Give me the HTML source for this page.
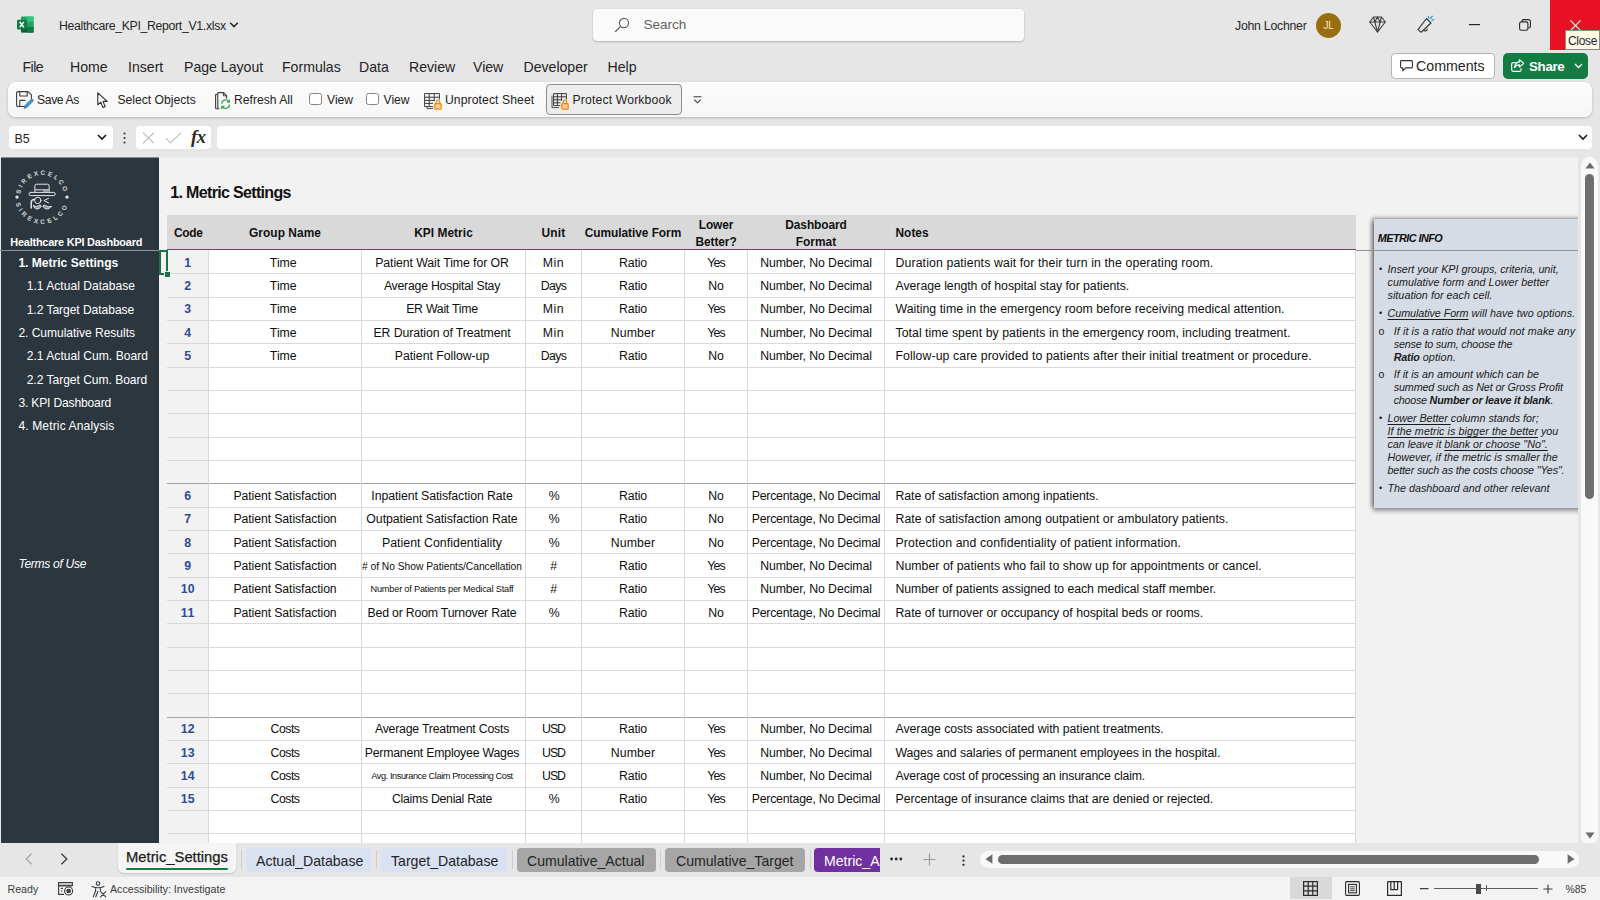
<!DOCTYPE html>
<html lang="en"><head><meta charset="utf-8"><title>Healthcare_KPI_Report_V1.xlsx - Excel</title>
<style>
*{box-sizing:border-box;margin:0;padding:0}
html,body{width:1600px;height:900px;overflow:hidden}
body{position:relative;background:#e6e6e6;font-family:"Liberation Sans",sans-serif;color:#242424;font-size:12.5px}
.abs,#titlebar *,#menubar *,#ribbon *,#fbar *,#tabs *,#status *{position:absolute;white-space:nowrap}
svg{position:absolute;overflow:visible}
/* ---- title bar ---- */
#titlebar{position:absolute;left:0;top:0;width:1600px;height:50px}
.fname{left:59px;top:18px;font-size:12.3px;letter-spacing:-.33px;color:#262626;line-height:16px}
#search{left:593px;top:9px;width:431px;height:32px;background:#fafafa;border-radius:4px;box-shadow:0 1px 2px rgba(0,0,0,.22),0 0 1px rgba(0,0,0,.12)}
#search .t{left:50.5px;top:6.5px;font-size:13.5px;color:#616161;line-height:18px}
.user{left:1235px;top:18px;font-size:12.3px;letter-spacing:-.25px;line-height:16px;color:#262626}
.avatar{left:1316px;top:12.5px;width:25px;height:25px;border-radius:50%;background:#9a6d0e}
.avatar span{left:0;width:25px;text-align:center;top:6px;font-size:10px;line-height:13px;color:#f6e7c4;letter-spacing:-.3px}
#closebtn{left:1550px;top:0;width:50px;height:50px;background:#e81123}
#tip{left:1565px;top:30px;width:34.5px;height:20px;background:#fdfde6;border:1px solid #8a8a8a}
#tip span{left:2px;top:2px;font-size:12px;letter-spacing:-.3px;line-height:16px;color:#1b1b3a}
/* ---- menu ---- */
#menubar{position:absolute;left:0;top:50px;width:1600px;height:32px}
#menubar .m{top:7.6px;font-size:14.1px;line-height:18px;color:#242424}
#cmt{left:1391px;top:3px;width:104px;height:25.5px;background:#fff;border:1px solid #b5b5b5;border-radius:4px}
#cmt span{left:24px;top:4px;font-size:14.2px;line-height:17px;color:#242424}
#share{left:1503px;top:3px;width:85px;height:25.5px;background:#127c42;border-radius:5px}
#share span{left:26px;top:4.5px;font-size:13.3px;line-height:17px;color:#fff;font-weight:bold;letter-spacing:-.3px}
/* ---- ribbon ---- */
#ribbon{position:absolute;left:8px;top:82px;width:1584px;height:35px;background:linear-gradient(#fbfbfb,#f7f7f7);border-radius:8px;box-shadow:0 1px 3px rgba(0,0,0,.22)}
#ribbon .r{top:11px;font-size:12.15px;line-height:15px;color:#242424}
#ribbon .cb{top:10.7px;width:12.8px;height:12.8px;border:1px solid #858585;border-radius:2.5px;background:#fff}
#pw{left:538px;top:2px;width:136px;height:30.5px;border:1px solid #8c8c8c;border-radius:4px;background:#ededed}
/* ---- formula bar ---- */
#fbar{position:absolute;left:0;top:117px;width:1600px;height:40px}
#nbox{left:9px;top:9px;width:104px;height:23px;background:#fff;border-radius:4px}
#nbox span{left:5.5px;top:4.5px;font-size:12.4px;line-height:16px;color:#242424}
#fxbox{left:136px;top:9px;width:75px;height:23px;background:#fff;border-radius:4px}
#finput{left:217px;top:9px;width:1374.5px;height:23px;background:#fff;border-radius:4px}
/* ---- sidebar ---- */
#side{position:absolute;left:1px;top:157.5px;width:157.5px;height:685.5px;background:#2c363f;color:#fff}
#side .s{position:absolute;white-space:nowrap;font-size:12.05px;line-height:15px;color:#fff}
#side .b{font-weight:bold}
#side .line{position:absolute;left:-1px;top:92.5px;width:159.5px;height:1px;background:#8f9396}
/* ---- sheet ---- */
#sheet{position:absolute;left:158.5px;top:157.5px;width:1419px;height:685.5px;background:#f2f2f2;overflow:hidden}
#sheet>*{position:absolute}
#sheet{--ox:-158.5px;--oy:-157.5px}
#sheet>*{margin-left:-158.5px;margin-top:-157.5px}
.ttl{left:170.3px;top:183px;font-size:16px;line-height:19px;font-weight:bold;color:#111;white-space:nowrap}
.thead{background:#d9d9d9;border-bottom:2px solid #76456e}
.th{top:215px;height:34px;display:flex;align-items:center;justify-content:center;text-align:center;font-weight:bold;font-size:11.9px;line-height:16.5px;color:#111;white-space:nowrap;padding-top:3px}
.th.l{justify-content:flex-start;text-align:left}
.tbody{background:#fff}
.codebg{background:#f2f2f2}
.hl{height:1px;background:#d9d9d9}
.hl.dark{background:#a3a3a3}
.vl{width:1px;background:#d9d9d9}
.td{height:23.3px;line-height:23.3px;text-align:center;font-size:12.3px;color:#0f0f0f;white-space:nowrap;overflow:hidden;padding-top:1px}
.td.l{text-align:left}
.td.code{font-weight:bold;color:#2f4b98}
/* ---- bottom ---- */
#tabs{position:absolute;left:0;top:843px;width:1600px;height:33px;background:#e6e6e6}
#tabs .tab{top:4.5px;height:24.5px;border-radius:4px;font-size:14.1px;line-height:18px}
#tabs .tab span{top:4px;left:10px}
#tabs .sep{top:7px;width:1px;height:19px;background:#cfcfcf}
#status{position:absolute;left:0;top:877px;width:1600px;height:23px;background:#f3f3f3}
#status .st{top:6px;font-size:10.65px;line-height:13px;color:#3b3b3b}
/* ---- info panel ---- */
#panel{left:1374px;top:218.5px;width:215px;height:289px;background:#d6dce5;box-shadow:-2px -1px 4px rgba(0,0,0,.4),-1px 3px 5px rgba(0,0,0,.36);font-style:italic;color:#1a1a1a;z-index:4}
#panel>*{position:absolute;white-space:nowrap}
#panel .ph{left:3.8px;top:12.5px;font-weight:bold;font-size:10.8px;line-height:14px;color:#111}
#panel .pl{left:13.5px;font-size:10.75px;line-height:13px}
#panel .pl.sub{left:19.7px}
#panel .bu{position:absolute;left:-8.5px;top:0;font-style:normal;font-size:9px}
#panel .bu.o{left:-15.3px;font-size:10.5px;top:0}
#panel u{text-decoration-thickness:1px;text-underline-offset:1.5px}
#vscroll{position:absolute;left:1581px;top:157px;width:17px;height:688px;background:#f9f9f9;border-radius:8.5px}
#vscroll *{position:absolute}
#vscroll .thumb{left:4px;top:17px;width:9px;height:325px;border-radius:4.5px;background:#6e6e6e}
#atab{left:117.5px;top:0;width:118.5px;height:29.5px;background:#f5f5f5;border-radius:0 0 6px 6px;box-shadow:0 1px 2px rgba(0,0,0,.15)}
#atab span{left:8.5px;top:4.5px;font-size:14.8px;line-height:18px;color:#1a1a1a;-webkit-text-stroke:.25px #1a1a1a}
#atab i{left:8.5px;top:25px;width:102px;height:2px;background:#127c42;border-radius:1px}
#hscroll{left:980px;top:8px;width:599px;height:16.5px;background:#f9f9f9;border-radius:8.25px}
#hscroll .thumb{left:17.5px;top:4px;width:541px;height:9px;border-radius:4.5px;background:#6e6e6e}

</style></head>
<body>
<div id="titlebar">
  <svg style="left:17px;top:16px" width="17" height="17" viewBox="0 0 17 17">
    <rect x="4" y="0.5" width="12.5" height="16" rx="1.2" fill="#21a366"/>
    <rect x="10.2" y="0.5" width="6.3" height="5.3" fill="#33c481"/>
    <rect x="4" y="5.8" width="6.2" height="5.3" fill="#107c41"/>
    <rect x="10.2" y="5.8" width="6.3" height="5.3" fill="#21a366"/>
    <rect x="4" y="11.1" width="12.5" height="5.4" fill="#185c37"/>
    <rect x="10.2" y="11.1" width="6.3" height="5.4" fill="#107c41"/>
    <rect x="0" y="3.8" width="9.6" height="9.6" rx="1" fill="#107c41"/>
    <path d="M2.7 5.9 L6.9 11.3 M6.9 5.9 L2.7 11.3" stroke="#fff" stroke-width="1.5" fill="none"/>
  </svg>
  <div class="fname">Healthcare_KPI_Report_V1.xlsx</div>
  <svg style="left:229px;top:21px" width="10" height="8" viewBox="0 0 10 8"><path d="M1.2 1.8 L5 5.6 L8.8 1.8" stroke="#262626" stroke-width="1.5" fill="none"/></svg>
  <div id="search">
    <svg style="left:21px;top:8px" width="16" height="16" viewBox="0 0 16 16"><circle cx="10" cy="6" r="4.6" stroke="#616161" stroke-width="1.2" fill="none"/><path d="M6.6 9.4 L1.2 14.8" stroke="#616161" stroke-width="1.3"/></svg>
    <div class="t">Search</div>
  </div>
  <div class="user">John Lochner</div>
  <div class="avatar"><span>JL</span></div>
  <svg style="left:1369px;top:16px" width="17" height="17" viewBox="0 0 17 17" fill="none" stroke="#3b3b3b" stroke-width="1.1" stroke-linejoin="round">
    <path d="M4.5 1 H12.5 L16.3 6 L8.5 16 L0.7 6 Z"/><path d="M0.7 6 H16.3 M5.8 6 L8.5 16 L11.2 6 M4.5 1 L5.8 6 L8.5 1 L11.2 6 L12.5 1"/>
  </svg>
  <svg style="left:1417px;top:15px" width="18" height="19" viewBox="0 0 18 19" fill="none" stroke="#3b3b3b" stroke-width="1.2" stroke-linejoin="round" stroke-linecap="round">
    <path d="M9.5 3.5 L14 8 L4.2 17.2 L1 14.6 Z"/><path d="M7 15 Q8.6 17.4 10.4 14.2"/>
    <path d="M12 3 L11.3 1.4 M13.8 3.4 L15.2 1.2 M15 5.2 L16.6 4.6" stroke="#1e90e0"/>
  </svg>
  <svg style="left:1469px;top:24px" width="12" height="2"><rect width="11" height="1.2" y="0" fill="#262626"/></svg>
  <svg style="left:1519px;top:19px" width="12" height="12" viewBox="0 0 12 12" fill="none" stroke="#262626" stroke-width="1.1">
    <rect x="0.6" y="2.9" width="8.3" height="8.3" rx="1.8"/><path d="M3 2.6 V2.2 Q3 0.6 4.6 0.6 H9.4 Q11.4 0.6 11.4 2.6 V7.4 Q11.4 9 9.8 9 H9.2"/>
  </svg>
  <div id="closebtn">
    <svg style="left:20px;top:20px" width="11" height="11" viewBox="0 0 11 11"><path d="M0.4 0.4 L10.6 10.6 M10.6 0.4 L0.4 10.6" stroke="#fff" stroke-width="1.1"/></svg>
  </div>
  <div id="tip"><span>Close</span></div>
</div>
<div id="menubar">
  <div class="m" style="left:22.5px;letter-spacing:-.55px">File</div>
  <div class="m" style="left:70px">Home</div>
  <div class="m" style="left:128px">Insert</div>
  <div class="m" style="left:184px">Page Layout</div>
  <div class="m" style="left:282px">Formulas</div>
  <div class="m" style="left:359px">Data</div>
  <div class="m" style="left:409px">Review</div>
  <div class="m" style="left:473px">View</div>
  <div class="m" style="left:523.5px">Developer</div>
  <div class="m" style="left:607.5px">Help</div>
  <div id="cmt">
    <svg style="left:8px;top:6px" width="13" height="12" viewBox="0 0 13 12" fill="none" stroke="#333" stroke-width="1.1" stroke-linejoin="round"><path d="M1.5 0.6 H11.5 Q12.4 0.6 12.4 1.5 V7 Q12.4 7.9 11.5 7.9 H5.6 L2.8 10.8 V7.9 H1.5 Q0.6 7.9 0.6 7 V1.5 Q0.6 0.6 1.5 0.6 Z"/></svg>
    <span>Comments</span>
  </div>
  <div id="share">
    <svg style="left:8px;top:6px" width="14" height="13" viewBox="0 0 14 13" fill="none" stroke="#fff" stroke-width="1.2" stroke-linejoin="round" stroke-linecap="round"><path d="M4.2 3.6 H2.2 Q0.7 3.6 0.7 5.1 V10.8 Q0.7 12.3 2.2 12.3 H8.6 Q10.1 12.3 10.1 10.8 V9.6"/><path d="M8.4 0.8 L12.8 4.4 L8.4 8 V5.9 Q5.2 5.7 3.6 8.6 Q4 3.4 8.4 2.9 Z"/></svg>
    <span>Share</span>
    <svg style="left:71px;top:10px" width="9" height="6" viewBox="0 0 9 6"><path d="M1 1 L4.5 4.5 L8 1" stroke="#fff" stroke-width="1.3" fill="none"/></svg>
  </div>
</div>
<div id="ribbon">
  <svg style="left:8px;top:9px" width="18" height="18" viewBox="0 0 18 18" fill="none" stroke="#3b3b3b" stroke-width="1.1" stroke-linejoin="round">
    <path d="M9 15.5 H2.2 Q0.6 15.5 0.6 13.9 V2.2 Q0.6 0.6 2.2 0.6 H12 L15.4 3.8 V8"/><path d="M3.8 0.6 V5 H11.2 V0.6"/><path d="M3.8 15.5 V9.4 H9.5"/>
    <path d="M8.4 17.4 L9.2 14.2 L15 8.4 Q16 7.6 16.9 8.5 Q17.7 9.4 16.9 10.3 L11.2 16.2 Z" fill="#3a96dd" stroke="#2b7bc0" stroke-width=".8"/>
  </svg>
  <div class="r" style="left:29px;letter-spacing:-.35px">Save As</div>
  <svg style="left:89px;top:10px" width="12" height="17" viewBox="0 0 12 17" fill="#fff" stroke="#2b2b2b" stroke-width="1.1" stroke-linejoin="round"><path d="M0.8 0.8 V12.8 L3.8 10.2 L6 15.6 L8.2 14.6 L6 9.4 H10.2 Z"/></svg>
  <div class="r" style="left:109.5px">Select Objects</div>
  <svg style="left:207px;top:9.5px" width="17" height="19" viewBox="0 0 17 19" fill="none" stroke-linejoin="round">
    <path d="M2.4 2.4 H1.4 Q0.6 2.4 0.6 3.2 V16 Q0.6 16.8 1.4 16.8 H4.4" stroke="#3b3b3b" stroke-width="1.1"/>
    <path d="M2.8 16.8 V1.4 Q2.8 0.6 3.6 0.6 H8.6 L11.6 3.6 V6.4" stroke="#3b3b3b" stroke-width="1.1"/><path d="M8.4 0.8 V3.8 H11.4" stroke="#3b3b3b" stroke-width="1"/>
    <path d="M6.6 11.8 A4 4 0 0 1 13.8 9.6 M14.4 7.4 V10 H11.8" stroke="#2fa84f" stroke-width="1.25"/>
    <path d="M14.6 12.6 A4 4 0 0 1 7.4 14.8 M6.8 17 V14.4 H9.4" stroke="#2fa84f" stroke-width="1.25"/>
  </svg>
  <div class="r" style="left:226px">Refresh All</div>
  <div class="cb" style="left:301px"></div>
  <div class="r" style="left:319px">View</div>
  <div class="cb" style="left:358px"></div>
  <div class="r" style="left:375.5px">View</div>
  <svg style="left:416px;top:11px" width="18" height="17" viewBox="0 0 18 17" fill="none" stroke="#3b3b3b" stroke-width="1" stroke-linejoin="round">
    <path d="M9 13.6 H0.6 V0.6 H15.4 V6.4"/><path d="M0.6 4.2 H15.4 M0.6 7.4 H11 M0.6 10.4 H9 M5.2 0.6 V13.6 M10.2 0.6 V8"/>
    <path d="M3 13.6 V15.6 H9" stroke-width=".9"/>
    <rect x="10.8" y="10.6" width="6.4" height="5.6" rx=".8" fill="#fbcf8e" stroke="#ec8a14" stroke-width="1.2"/><path d="M12.3 10.4 V8.8 Q12.3 7.2 14 7.2 Q15.7 7.2 15.7 8.8 V10.4" stroke="#ec8a14" stroke-width="1.2"/>
  </svg>
  <div class="r" style="left:437px;letter-spacing:.1px">Unprotect Sheet</div>
  <div id="pw"></div>
  <svg style="left:543px;top:11px" width="18" height="17" viewBox="0 0 18 17" fill="none" stroke="#3b3b3b" stroke-width="1" stroke-linejoin="round">
    <path d="M1 2.6 V14.6 H8" stroke-width=".9"/>
    <path d="M9.4 12.6 H2.6 V0.6 H15.4 V6.4"/><path d="M2.6 3.8 H15.4 M2.6 6.8 H11 M2.6 9.8 H9.4 M6.4 0.6 V12.6 M10.6 0.6 V7.6"/>
    <rect x="10.8" y="10.6" width="6.4" height="5.6" rx=".8" fill="#fbcf8e" stroke="#ec8a14" stroke-width="1.2"/><path d="M12.3 10.4 V8.8 Q12.3 7.2 14 7.2 Q15.7 7.2 15.7 8.8 V10.4" stroke="#ec8a14" stroke-width="1.2"/>
  </svg>
  <div class="r" style="left:564.5px;letter-spacing:.18px">Protect Workbook</div>
  <svg style="left:685px;top:14px" width="9" height="8" viewBox="0 0 9 8" fill="none" stroke="#3b3b3b" stroke-width="1.1"><path d="M0.5 0.8 H8.5 M1.2 3.6 L4.5 6.8 L7.8 3.6"/></svg>
</div>
<div id="fbar">
  <div id="nbox"><span>B5</span>
    <svg style="left:88px;top:8px" width="10" height="7" viewBox="0 0 10 7"><path d="M1 1 L5 5 L9 1" stroke="#1a1a1a" stroke-width="1.6" fill="none"/></svg>
  </div>
  <svg style="left:122.5px;top:15px" width="3" height="13" viewBox="0 0 3 13" fill="#3b3b3b"><circle cx="1.5" cy="1.5" r="1.1"/><circle cx="1.5" cy="6" r="1.1"/><circle cx="1.5" cy="10.5" r="1.1"/></svg>
  <div id="fxbox">
    <svg style="left:6px;top:6px" width="13" height="12" viewBox="0 0 13 12"><path d="M1 0.6 L12 11.4 M12 0.6 L1 11.4" stroke="#b9b9b9" stroke-width="1.1"/></svg>
    <svg style="left:29px;top:6px" width="17" height="12" viewBox="0 0 17 12"><path d="M0.8 6.2 L5.4 10.8 L16.2 0.8" stroke="#b9b9b9" stroke-width="1.1" fill="none"/></svg>
    <span style="left:55px;top:1px;font-family:'Liberation Serif',serif;font-style:italic;font-weight:bold;font-size:18.5px;line-height:20px;color:#2b2b2b;letter-spacing:-.3px">fx</span>
  </div>
  <div id="finput">
    <svg style="left:1361px;top:7.5px" width="10" height="7" viewBox="0 0 10 7"><path d="M1 1 L5 5 L9 1" stroke="#1a1a1a" stroke-width="1.6" fill="none"/></svg>
  </div>
</div>
<div id="side">
  <svg style="left:11.7px;top:10.6px" width="58" height="58" viewBox="-29 -29 58 58">
          <path id="arcT" fill="none" d="M -22.09 -0.77 A 22.1 22.1 0 0 1 22.09 -0.77"/>
      <path id="arcB" fill="none" d="M -26.78 0.94 A 26.8 26.8 0 0 0 26.78 0.94"/>
    <text font-family="Liberation Sans, sans-serif" font-size="5.9" fill="#cdd1d4" stroke="#cdd1d4" stroke-width=".3" letter-spacing="2.5"><textPath href="#arcT" startOffset="50%" text-anchor="middle">SIREXCELCO</textPath></text>
    <text font-family="Liberation Sans, sans-serif" font-size="5.9" fill="#cdd1d4" stroke="#cdd1d4" stroke-width=".3" letter-spacing="3.25"><textPath href="#arcB" startOffset="50%" text-anchor="middle">SIREXCELCO</textPath></text>
    <circle cx="-25" cy="0.1" r="1.7" fill="#e3e5e7"/><circle cx="25" cy="0.1" r="1.7" fill="#e3e5e7"/>
    <g fill="none" stroke="#e3e5e7" stroke-width="1" stroke-linecap="round" stroke-linejoin="round">
      <rect x="-13" y="-4.6" width="26.2" height="3.2" rx="1.6"/>
      <path d="M-7.1 -4.8 V-11.4 Q-7.1 -12.8 -5.7 -12.8 H5.7 Q7.1 -12.8 7.1 -11.4 V-4.8"/>
      <path d="M-7 -7.2 H7 M1.4 -6 H5.6" />
      <circle cx="-4.2" cy="3.4" r="3.2"/>
      <path d="M-10.8 11 V5.4 Q-10.8 2.6 -7.4 2.6" stroke-width="1.5"/>
      <path d="M6.6 1.3 L1.9 3.6 L6.6 5.9"/>
      <path d="M-8.6 8.9 Q-5.4 10.4 -3.2 8.6 Q-1.6 7.4 -0.6 9 Q-2.2 12.4 -5.2 12 Q-7.6 11.6 -8.6 8.9 Z" fill="#e3e5e7" fill-opacity=".55"/>
      <path d="M9.2 9.6 Q5.6 10.6 3.6 8.6 Q2 7.4 0.8 9 Q2.4 12.4 5.4 12 Q8 11.6 9.2 9.6 Z" fill="#e3e5e7" fill-opacity=".55"/>
    </g>
  </svg>
  <div class="s b" style="left:9.3px;top:77.5px;font-size:10.9px;letter-spacing:-0.207px">Healthcare KPI Dashboard</div>
  <div class="line"></div>
  <div class="s b" style="left:17.4px;top:98.3px;letter-spacing:0.005px">1. Metric Settings</div>
  <div class="s " style="left:25.7px;top:121.6px;letter-spacing:0.025px">1.1 Actual Database</div>
  <div class="s " style="left:25.7px;top:145px;letter-spacing:-0.039px">1.2 Target Database</div>
  <div class="s " style="left:17.4px;top:168.3px;letter-spacing:-0.028px">2. Cumulative Results</div>
  <div class="s " style="left:25.7px;top:191.6px;letter-spacing:0.035px">2.1 Actual Cum. Board</div>
  <div class="s " style="left:25.7px;top:215px;letter-spacing:-0.023px">2.2 Target Cum. Board</div>
  <div class="s " style="left:17.4px;top:238.3px;letter-spacing:-0.152px">3. KPI Dashboard</div>
  <div class="s " style="left:17.4px;top:261.6px;letter-spacing:0.134px">4. Metric Analysis</div>
  <div class="s" style="left:17.5px;top:399.3px;font-style:italic;letter-spacing:-0.297px">Terms of Use</div>
</div>
<div class="abs" style="left:158.5px;top:250px;width:9.5px;height:24.7px;border:2px solid #1b7245;background:#f2f2f2;z-index:3"></div>
<div class="abs" style="left:164.3px;top:271.4px;width:5.4px;height:5.2px;background:#1b7245;border:1px solid #f2f2f2;border-right:0;border-bottom:0;z-index:4"></div>
<div class="abs" style="left:1px;top:157px;width:157.5px;height:1px;background:#8a8f94;z-index:2"></div>
<div class="abs" style="left:158.5px;top:157px;width:1419px;height:1px;background:#ececec;z-index:2"></div>
<div id="sheet">
<div class="ttl" style="letter-spacing:-0.666px">1. Metric Settings</div>
<div class="thead" style="left:167px;top:215px;width:1188.5px;height:35.5px"></div>
<div class="th l" style="left:167px;width:41.5px;padding-left:7px;"><div><span style="letter-spacing:-0.262px">Code</span></div></div>
<div class="th" style="left:208.5px;width:153px;"><div><span style="letter-spacing:0.059px">Group Name</span></div></div>
<div class="th" style="left:361.5px;width:164px;"><div><span style="letter-spacing:0.048px">KPI Metric</span></div></div>
<div class="th" style="left:525.5px;width:56px;"><div><span style="letter-spacing:0.281px">Unit</span></div></div>
<div class="th" style="left:581.5px;width:103px;"><div><span style="letter-spacing:-0.052px">Cumulative Form</span></div></div>
<div class="th" style="left:684.5px;width:63px;"><div><span style="letter-spacing:-0.094px">Lower</span><br><span style="letter-spacing:-0.067px">Better?</span></div></div>
<div class="th" style="left:747.5px;width:137px;"><div><span style="letter-spacing:-0.085px">Dashboard</span><br><span style="letter-spacing:0.052px">Format</span></div></div>
<div class="th l" style="left:884.5px;width:471px;padding-left:11px;"><div><span style="letter-spacing:0.016px">Notes</span></div></div>
<div class="tbody" style="left:167px;top:250px;width:1188.5px;height:593px"></div>
<div class="codebg" style="left:167px;top:250px;width:41.5px;height:593px"></div>
<div class="hl" style="left:167px;top:273px;width:1188.5px"></div>
<div class="hl" style="left:167px;top:297px;width:1188.5px"></div>
<div class="hl" style="left:167px;top:320px;width:1188.5px"></div>
<div class="hl" style="left:167px;top:343px;width:1188.5px"></div>
<div class="hl" style="left:167px;top:367px;width:1188.5px"></div>
<div class="hl" style="left:167px;top:390px;width:1188.5px"></div>
<div class="hl" style="left:167px;top:413px;width:1188.5px"></div>
<div class="hl" style="left:167px;top:437px;width:1188.5px"></div>
<div class="hl" style="left:167px;top:460px;width:1188.5px"></div>
<div class="hl dark" style="left:167px;top:483px;width:1188.5px"></div>
<div class="hl" style="left:167px;top:507px;width:1188.5px"></div>
<div class="hl" style="left:167px;top:530px;width:1188.5px"></div>
<div class="hl" style="left:167px;top:553px;width:1188.5px"></div>
<div class="hl" style="left:167px;top:577px;width:1188.5px"></div>
<div class="hl" style="left:167px;top:600px;width:1188.5px"></div>
<div class="hl" style="left:167px;top:623px;width:1188.5px"></div>
<div class="hl" style="left:167px;top:647px;width:1188.5px"></div>
<div class="hl" style="left:167px;top:670px;width:1188.5px"></div>
<div class="hl" style="left:167px;top:693px;width:1188.5px"></div>
<div class="hl dark" style="left:167px;top:717px;width:1188.5px"></div>
<div class="hl" style="left:167px;top:740px;width:1188.5px"></div>
<div class="hl" style="left:167px;top:763px;width:1188.5px"></div>
<div class="hl" style="left:167px;top:787px;width:1188.5px"></div>
<div class="hl" style="left:167px;top:810px;width:1188.5px"></div>
<div class="hl" style="left:167px;top:833px;width:1188.5px"></div>
<div class="vl" style="left:208px;top:250px;height:593px"></div>
<div class="vl" style="left:361px;top:250px;height:593px"></div>
<div class="vl" style="left:525px;top:250px;height:593px"></div>
<div class="vl" style="left:581px;top:250px;height:593px"></div>
<div class="vl" style="left:684px;top:250px;height:593px"></div>
<div class="vl" style="left:747px;top:250px;height:593px"></div>
<div class="vl" style="left:884px;top:250px;height:593px"></div>
<div class="vl" style="left:1355px;top:250px;height:593px"></div>
<div class="td code" style="left:167px;top:250.5px;width:41.5px;letter-spacing:0.047px;">1</div>
<div class="td" style="left:208.5px;top:250.5px;width:153px;padding-right:3.5px;letter-spacing:-0.023px;">Time</div>
<div class="td" style="left:361.5px;top:250.5px;width:164px;padding-right:3px;letter-spacing:-0.077px;">Patient Wait Time for OR</div>
<div class="td" style="left:525.5px;top:250.5px;width:56px;letter-spacing:0.526px;">Min</div>
<div class="td" style="left:581.5px;top:250.5px;width:103px;letter-spacing:-0.166px;">Ratio</div>
<div class="td" style="left:684.5px;top:250.5px;width:63px;letter-spacing:-0.906px;">Yes</div>
<div class="td" style="left:747.5px;top:250.5px;width:137px;letter-spacing:-0.095px;">Number, No Decimal</div>
<div class="td l" style="left:884.5px;top:250.5px;width:471px;padding-left:11px;letter-spacing:0.114px;">Duration patients wait for their turn in the operating room.</div>
<div class="td code" style="left:167px;top:273.8px;width:41.5px;letter-spacing:0.047px;">2</div>
<div class="td" style="left:208.5px;top:273.8px;width:153px;padding-right:3.5px;letter-spacing:-0.023px;">Time</div>
<div class="td" style="left:361.5px;top:273.8px;width:164px;padding-right:3px;letter-spacing:-0.248px;">Average Hospital Stay</div>
<div class="td" style="left:525.5px;top:273.8px;width:56px;letter-spacing:-0.656px;">Days</div>
<div class="td" style="left:581.5px;top:273.8px;width:103px;letter-spacing:-0.166px;">Ratio</div>
<div class="td" style="left:684.5px;top:273.8px;width:63px;letter-spacing:-0.062px;">No</div>
<div class="td" style="left:747.5px;top:273.8px;width:137px;letter-spacing:-0.095px;">Number, No Decimal</div>
<div class="td l" style="left:884.5px;top:273.8px;width:471px;padding-left:11px;letter-spacing:-0.043px;">Average length of hospital stay for patients.</div>
<div class="td code" style="left:167px;top:297.2px;width:41.5px;letter-spacing:0.047px;">3</div>
<div class="td" style="left:208.5px;top:297.2px;width:153px;padding-right:3.5px;letter-spacing:-0.023px;">Time</div>
<div class="td" style="left:361.5px;top:297.2px;width:164px;padding-right:3px;letter-spacing:-0.246px;">ER Wait Time</div>
<div class="td" style="left:525.5px;top:297.2px;width:56px;letter-spacing:0.526px;">Min</div>
<div class="td" style="left:581.5px;top:297.2px;width:103px;letter-spacing:-0.166px;">Ratio</div>
<div class="td" style="left:684.5px;top:297.2px;width:63px;letter-spacing:-0.906px;">Yes</div>
<div class="td" style="left:747.5px;top:297.2px;width:137px;letter-spacing:-0.095px;">Number, No Decimal</div>
<div class="td l" style="left:884.5px;top:297.2px;width:471px;padding-left:11px;letter-spacing:0.027px;">Waiting time in the emergency room before receiving medical attention.</div>
<div class="td code" style="left:167px;top:320.5px;width:41.5px;letter-spacing:0.047px;">4</div>
<div class="td" style="left:208.5px;top:320.5px;width:153px;padding-right:3.5px;letter-spacing:-0.023px;">Time</div>
<div class="td" style="left:361.5px;top:320.5px;width:164px;padding-right:3px;letter-spacing:-0.103px;">ER Duration of Treatment</div>
<div class="td" style="left:525.5px;top:320.5px;width:56px;letter-spacing:0.526px;">Min</div>
<div class="td" style="left:581.5px;top:320.5px;width:103px;letter-spacing:0.115px;">Number</div>
<div class="td" style="left:684.5px;top:320.5px;width:63px;letter-spacing:-0.906px;">Yes</div>
<div class="td" style="left:747.5px;top:320.5px;width:137px;letter-spacing:-0.095px;">Number, No Decimal</div>
<div class="td l" style="left:884.5px;top:320.5px;width:471px;padding-left:11px;letter-spacing:0.035px;">Total time spent by patients in the emergency room, including treatment.</div>
<div class="td code" style="left:167px;top:343.8px;width:41.5px;letter-spacing:0.047px;">5</div>
<div class="td" style="left:208.5px;top:343.8px;width:153px;padding-right:3.5px;letter-spacing:-0.023px;">Time</div>
<div class="td" style="left:361.5px;top:343.8px;width:164px;padding-right:3px;letter-spacing:-0.033px;">Patient Follow-up</div>
<div class="td" style="left:525.5px;top:343.8px;width:56px;letter-spacing:-0.656px;">Days</div>
<div class="td" style="left:581.5px;top:343.8px;width:103px;letter-spacing:-0.166px;">Ratio</div>
<div class="td" style="left:684.5px;top:343.8px;width:63px;letter-spacing:-0.062px;">No</div>
<div class="td" style="left:747.5px;top:343.8px;width:137px;letter-spacing:-0.095px;">Number, No Decimal</div>
<div class="td l" style="left:884.5px;top:343.8px;width:471px;padding-left:11px;letter-spacing:0.077px;">Follow-up care provided to patients after their initial treatment or procedure.</div>
<div class="td code" style="left:167px;top:483.8px;width:41.5px;letter-spacing:0.047px;">6</div>
<div class="td" style="left:208.5px;top:483.8px;width:153px;letter-spacing:-0.103px;">Patient Satisfaction</div>
<div class="td" style="left:361.5px;top:483.8px;width:164px;padding-right:3px;letter-spacing:-0.082px;">Inpatient Satisfaction Rate</div>
<div class="td" style="left:525.5px;top:483.8px;width:56px;letter-spacing:-1.422px;">%</div>
<div class="td" style="left:581.5px;top:483.8px;width:103px;letter-spacing:-0.166px;">Ratio</div>
<div class="td" style="left:684.5px;top:483.8px;width:63px;letter-spacing:-0.062px;">No</div>
<div class="td" style="left:747.5px;top:483.8px;width:137px;letter-spacing:-0.211px;">Percentage, No Decimal</div>
<div class="td l" style="left:884.5px;top:483.8px;width:471px;padding-left:11px;letter-spacing:-0.054px;">Rate of satisfaction among inpatients.</div>
<div class="td code" style="left:167px;top:507.2px;width:41.5px;letter-spacing:0.047px;">7</div>
<div class="td" style="left:208.5px;top:507.2px;width:153px;letter-spacing:-0.103px;">Patient Satisfaction</div>
<div class="td" style="left:361.5px;top:507.2px;width:164px;padding-right:3px;letter-spacing:-0.066px;">Outpatient Satisfaction Rate</div>
<div class="td" style="left:525.5px;top:507.2px;width:56px;letter-spacing:-1.422px;">%</div>
<div class="td" style="left:581.5px;top:507.2px;width:103px;letter-spacing:-0.166px;">Ratio</div>
<div class="td" style="left:684.5px;top:507.2px;width:63px;letter-spacing:-0.062px;">No</div>
<div class="td" style="left:747.5px;top:507.2px;width:137px;letter-spacing:-0.211px;">Percentage, No Decimal</div>
<div class="td l" style="left:884.5px;top:507.2px;width:471px;padding-left:11px;letter-spacing:0.024px;">Rate of satisfaction among outpatient or ambulatory patients.</div>
<div class="td code" style="left:167px;top:530.5px;width:41.5px;letter-spacing:0.047px;">8</div>
<div class="td" style="left:208.5px;top:530.5px;width:153px;letter-spacing:-0.103px;">Patient Satisfaction</div>
<div class="td" style="left:361.5px;top:530.5px;width:164px;padding-right:3px;letter-spacing:0.048px;">Patient Confidentiality</div>
<div class="td" style="left:525.5px;top:530.5px;width:56px;letter-spacing:-1.422px;">%</div>
<div class="td" style="left:581.5px;top:530.5px;width:103px;letter-spacing:0.115px;">Number</div>
<div class="td" style="left:684.5px;top:530.5px;width:63px;letter-spacing:-0.062px;">No</div>
<div class="td" style="left:747.5px;top:530.5px;width:137px;letter-spacing:-0.211px;">Percentage, No Decimal</div>
<div class="td l" style="left:884.5px;top:530.5px;width:471px;padding-left:11px;letter-spacing:0.124px;">Protection and confidentiality of patient information.</div>
<div class="td code" style="left:167px;top:553.8px;width:41.5px;letter-spacing:0.047px;">9</div>
<div class="td" style="left:208.5px;top:553.8px;width:153px;letter-spacing:-0.103px;">Patient Satisfaction</div>
<div class="td" style="left:361.5px;top:553.8px;width:164px;font-size:10.3px;padding-right:3px;letter-spacing:-0.042px;"># of No Show Patients/Cancellation</div>
<div class="td" style="left:525.5px;top:553.8px;width:56px;letter-spacing:-0.219px;">#</div>
<div class="td" style="left:581.5px;top:553.8px;width:103px;letter-spacing:-0.166px;">Ratio</div>
<div class="td" style="left:684.5px;top:553.8px;width:63px;letter-spacing:-0.906px;">Yes</div>
<div class="td" style="left:747.5px;top:553.8px;width:137px;letter-spacing:-0.095px;">Number, No Decimal</div>
<div class="td l" style="left:884.5px;top:553.8px;width:471px;padding-left:11px;letter-spacing:0.038px;">Number of patients who fail to show up for appointments or cancel.</div>
<div class="td code" style="left:167px;top:577.2px;width:41.5px;letter-spacing:0.047px;">10</div>
<div class="td" style="left:208.5px;top:577.2px;width:153px;letter-spacing:-0.103px;">Patient Satisfaction</div>
<div class="td" style="left:361.5px;top:577.2px;width:164px;font-size:9.2px;padding-right:3px;letter-spacing:-0.194px;">Number of Patients per Medical Staff</div>
<div class="td" style="left:525.5px;top:577.2px;width:56px;letter-spacing:-0.219px;">#</div>
<div class="td" style="left:581.5px;top:577.2px;width:103px;letter-spacing:-0.166px;">Ratio</div>
<div class="td" style="left:684.5px;top:577.2px;width:63px;letter-spacing:-0.906px;">Yes</div>
<div class="td" style="left:747.5px;top:577.2px;width:137px;letter-spacing:-0.095px;">Number, No Decimal</div>
<div class="td l" style="left:884.5px;top:577.2px;width:471px;padding-left:11px;letter-spacing:-0.055px;">Number of patients assigned to each medical staff member.</div>
<div class="td code" style="left:167px;top:600.5px;width:41.5px;letter-spacing:0.391px;">11</div>
<div class="td" style="left:208.5px;top:600.5px;width:153px;letter-spacing:-0.103px;">Patient Satisfaction</div>
<div class="td" style="left:361.5px;top:600.5px;width:164px;padding-right:3px;letter-spacing:-0.198px;">Bed or Room Turnover Rate</div>
<div class="td" style="left:525.5px;top:600.5px;width:56px;letter-spacing:-1.422px;">%</div>
<div class="td" style="left:581.5px;top:600.5px;width:103px;letter-spacing:-0.166px;">Ratio</div>
<div class="td" style="left:684.5px;top:600.5px;width:63px;letter-spacing:-0.062px;">No</div>
<div class="td" style="left:747.5px;top:600.5px;width:137px;letter-spacing:-0.211px;">Percentage, No Decimal</div>
<div class="td l" style="left:884.5px;top:600.5px;width:471px;padding-left:11px;letter-spacing:-0.036px;">Rate of turnover or occupancy of hospital beds or rooms.</div>
<div class="td code" style="left:167px;top:717.2px;width:41.5px;letter-spacing:0.047px;">12</div>
<div class="td" style="left:208.5px;top:717.2px;width:153px;letter-spacing:-0.525px;">Costs</div>
<div class="td" style="left:361.5px;top:717.2px;width:164px;padding-right:3px;letter-spacing:-0.216px;">Average Treatment Costs</div>
<div class="td" style="left:525.5px;top:717.2px;width:56px;letter-spacing:-1.047px;">USD</div>
<div class="td" style="left:581.5px;top:717.2px;width:103px;letter-spacing:-0.166px;">Ratio</div>
<div class="td" style="left:684.5px;top:717.2px;width:63px;letter-spacing:-0.906px;">Yes</div>
<div class="td" style="left:747.5px;top:717.2px;width:137px;letter-spacing:-0.095px;">Number, No Decimal</div>
<div class="td l" style="left:884.5px;top:717.2px;width:471px;padding-left:11px;letter-spacing:-0.045px;">Average costs associated with patient treatments.</div>
<div class="td code" style="left:167px;top:740.5px;width:41.5px;letter-spacing:0.047px;">13</div>
<div class="td" style="left:208.5px;top:740.5px;width:153px;letter-spacing:-0.525px;">Costs</div>
<div class="td" style="left:361.5px;top:740.5px;width:164px;padding-right:3px;letter-spacing:-0.201px;">Permanent Employee Wages</div>
<div class="td" style="left:525.5px;top:740.5px;width:56px;letter-spacing:-1.047px;">USD</div>
<div class="td" style="left:581.5px;top:740.5px;width:103px;letter-spacing:0.115px;">Number</div>
<div class="td" style="left:684.5px;top:740.5px;width:63px;letter-spacing:-0.906px;">Yes</div>
<div class="td" style="left:747.5px;top:740.5px;width:137px;letter-spacing:-0.095px;">Number, No Decimal</div>
<div class="td l" style="left:884.5px;top:740.5px;width:471px;padding-left:11px;letter-spacing:-0.074px;">Wages and salaries of permanent employees in the hospital.</div>
<div class="td code" style="left:167px;top:763.8px;width:41.5px;letter-spacing:0.047px;">14</div>
<div class="td" style="left:208.5px;top:763.8px;width:153px;letter-spacing:-0.525px;">Costs</div>
<div class="td" style="left:361.5px;top:763.8px;width:164px;font-size:9.2px;padding-right:3px;letter-spacing:-0.42px;">Avg. Insurance Claim Processing Cost</div>
<div class="td" style="left:525.5px;top:763.8px;width:56px;letter-spacing:-1.047px;">USD</div>
<div class="td" style="left:581.5px;top:763.8px;width:103px;letter-spacing:-0.166px;">Ratio</div>
<div class="td" style="left:684.5px;top:763.8px;width:63px;letter-spacing:-0.906px;">Yes</div>
<div class="td" style="left:747.5px;top:763.8px;width:137px;letter-spacing:-0.095px;">Number, No Decimal</div>
<div class="td l" style="left:884.5px;top:763.8px;width:471px;padding-left:11px;letter-spacing:-0.172px;">Average cost of processing an insurance claim.</div>
<div class="td code" style="left:167px;top:787.2px;width:41.5px;letter-spacing:0.047px;">15</div>
<div class="td" style="left:208.5px;top:787.2px;width:153px;letter-spacing:-0.525px;">Costs</div>
<div class="td" style="left:361.5px;top:787.2px;width:164px;padding-right:3px;letter-spacing:-0.289px;">Claims Denial Rate</div>
<div class="td" style="left:525.5px;top:787.2px;width:56px;letter-spacing:-1.422px;">%</div>
<div class="td" style="left:581.5px;top:787.2px;width:103px;letter-spacing:-0.166px;">Ratio</div>
<div class="td" style="left:684.5px;top:787.2px;width:63px;letter-spacing:-0.906px;">Yes</div>
<div class="td" style="left:747.5px;top:787.2px;width:137px;letter-spacing:-0.211px;">Percentage, No Decimal</div>
<div class="td l" style="left:884.5px;top:787.2px;width:471px;padding-left:11px;letter-spacing:-0.073px;">Percentage of insurance claims that are denied or rejected.</div>
<div class="abs" style="left:1355.5px;top:250px;width:230px;height:1px;background:#8f8f8f;z-index:5"></div>
<div id="panel">
  <div class="ph" style="letter-spacing:-0.533px">METRIC INFO</div>
  <div class="pl " style="top:44.4px"><i class="bu">•</i><span style="letter-spacing:-0.008px">Insert your KPI groups, criteria, unit,</span><br><span style="letter-spacing:0.066px">cumulative form and Lower better</span><br><span style="letter-spacing:0.038px">situation for each cell.</span></div>
  <div class="pl " style="top:88.3px"><i class="bu">•</i><u style="letter-spacing:-0.056px">Cumulative Form</u><span style="letter-spacing:0.094px"> will have two options.</span></div>
  <div class="pl sub" style="top:106.3px"><i class="bu o">o</i><span style="letter-spacing:0.1px">If it is a ratio that would not make any</span><br><span style="letter-spacing:-0.162px">sense to sum, choose the</span><br><b style="letter-spacing:-0.188px">Ratio</b><span style="letter-spacing:0.131px"> option.</span></div>
  <div class="pl sub" style="top:149.6px"><i class="bu o">o</i><span style="letter-spacing:0.02px">If it is an amount which can be</span><br><span style="letter-spacing:-0.119px">summed such as Net or Gross Profit</span><br><span style="letter-spacing:-0.252px">choose </span><b style="letter-spacing:-0.169px">Number or leave it blank</b><span style="letter-spacing:-0.016px">.</span></div>
  <div class="pl " style="top:193.8px"><i class="bu">•</i><u style="letter-spacing:-0.052px">Lower Better </u><span style="letter-spacing:0.003px">column stands for;</span><br><u style="letter-spacing:0.069px">If the metric is bigger the better</u><span style="letter-spacing:-0.078px"> you</span><br><span style="letter-spacing:-0.046px">can leave it </span><u style="letter-spacing:0.012px">blank or choose "No".</u><br><span style="letter-spacing:0.019px">However, if the metric is smaller the</span><br><span style="letter-spacing:-0.153px">better such as the costs choose "Yes".</span></div>
  <div class="pl " style="top:263.3px"><i class="bu">•</i><span style="letter-spacing:-0.002px">The dashboard and other relevant</span></div>
</div>
</div>
<div id="vscroll">
  <svg style="left:3.5px;top:4.8px" width="10" height="7" viewBox="0 0 10 7"><path d="M0.4 6.6 L5 0.4 L9.6 6.6 Z" fill="#6b6b6b"/></svg>
  <div class="thumb"></div>
  <svg style="left:3.5px;top:675px" width="10" height="7" viewBox="0 0 10 7"><path d="M0.4 0.6 L5 6.4 L9.6 0.6 Z" fill="#6b6b6b"/></svg>
</div>
<div id="tabs">
  <svg style="left:25px;top:10px" width="8" height="12" viewBox="0 0 8 12"><path d="M6.6 0.8 L1.2 6 L6.6 11.2" stroke="#a6a6a6" stroke-width="1.3" fill="none"/></svg>
  <svg style="left:60px;top:10px" width="8" height="12" viewBox="0 0 8 12"><path d="M1.4 0.8 L6.8 6 L1.4 11.2" stroke="#3b3b3b" stroke-width="1.3" fill="none"/></svg>
  <div id="atab"><span>Metric_Settings</span><i></i></div>
  <div class="sep" style="left:241px"></div>
  <div class="tab" style="left:246px;width:125px;background:#d9e1f2"><span>Actual_Database</span></div>
  <div class="sep" style="left:376px"></div>
  <div class="tab" style="left:381px;width:126px;background:#d9e1f2"><span>Target_Database</span></div>
  <div class="sep" style="left:512px"></div>
  <div class="tab" style="left:517px;width:139px;background:#a6a6a6"><span>Cumulative_Actual</span></div>
  <div class="sep" style="left:660px"></div>
  <div class="tab" style="left:665px;width:140px;background:#a6a6a6"><span style="left:11px">Cumulative_Target</span></div>
  <div class="sep" style="left:810px"></div>
  <div class="tab" style="left:814px;width:66px;background:#7030a0;border-radius:4px 0 0 4px;overflow:hidden;color:#fff"><span>Metric_Analysis</span></div>
  <svg style="left:890px;top:14px" width="13" height="4" viewBox="0 0 13 4" fill="#262626"><circle cx="1.6" cy="2" r="1.4"/><circle cx="6.2" cy="2" r="1.4"/><circle cx="10.8" cy="2" r="1.4"/></svg>
  <svg style="left:923px;top:10px" width="13" height="13" viewBox="0 0 13 13"><path d="M6.5 0.5 V12.5 M0.5 6.5 H12.5" stroke="#9a9a9a" stroke-width="1.2"/></svg>
  <svg style="left:961.5px;top:12px" width="3" height="12" viewBox="0 0 3 12" fill="#262626"><circle cx="1.5" cy="1.4" r="1.1"/><circle cx="1.5" cy="5.6" r="1.1"/><circle cx="1.5" cy="9.8" r="1.1"/></svg>
  <div id="hscroll">
    <svg style="left:5px;top:3.2px" width="8" height="10" viewBox="0 0 8 10"><path d="M7.4 0.3 L0.5 5 L7.4 9.7 Z" fill="#6b6b6b"/></svg>
    <div class="thumb"></div>
    <svg style="left:586.5px;top:3.2px" width="8" height="10" viewBox="0 0 8 10"><path d="M0.6 0.3 L7.5 5 L0.6 9.7 Z" fill="#6b6b6b"/></svg>
  </div>
</div>
<div id="status">
  <div class="st" style="left:7.5px">Ready</div>
  <svg style="left:58px;top:5px" width="16" height="14" viewBox="0 0 16 14" fill="none" stroke="#3b3b3b" stroke-width="1.1"><path d="M6 12.4 H0.6 V0.6 H14.4 V4"/><path d="M0.6 3.6 H14.4" stroke-width="1.6"/><path d="M2.8 6.4 H5 M2.8 9 H4.4"/><circle cx="10.6" cy="9" r="4"/><circle cx="10.6" cy="9" r="1.8" fill="#3b3b3b"/></svg>
  <svg style="left:91px;top:4px" width="16" height="17" viewBox="0 0 16 17" fill="none" stroke="#3b3b3b" stroke-width="1.1" stroke-linecap="round" stroke-linejoin="round"><circle cx="7" cy="2.6" r="1.8"/><path d="M1 5.4 Q7 8 13 5.4 M4.6 6.8 V10 L2.4 15.6 M9.4 6.8 V9.4 M7 10.4 L4.8 15.8"/><path d="M9.6 10.6 L14.8 15.8 M14.8 10.6 L9.6 15.8"/></svg>
  <div class="st" style="left:110px">Accessibility: Investigate</div>
  <div class="abs" style="left:1290px;top:0px;width:42px;height:22px;background:#d9d9d9"></div>
  <svg style="left:1303px;top:4px" width="15" height="15" viewBox="0 0 15 15" fill="none" stroke="#2b2b2b" stroke-width="1.2"><rect x="0.6" y="0.6" width="13.8" height="13.8"/><path d="M5.2 0.6 V14.4 M9.8 0.6 V14.4 M0.6 5.2 H14.4 M0.6 9.8 H14.4"/></svg>
  <svg style="left:1345px;top:4px" width="15" height="15" viewBox="0 0 15 15" fill="none" stroke="#2b2b2b" stroke-width="1.1"><rect x="0.6" y="0.6" width="13.8" height="13.8" rx="1.2"/><rect x="3.6" y="3.4" width="7.8" height="8.4"/><path d="M5.2 5.8 H9.8 M5.2 7.8 H9.8 M5.2 9.6 H9.8" stroke-width=".9"/></svg>
  <svg style="left:1387px;top:4px" width="15" height="15" viewBox="0 0 15 15" fill="none" stroke="#2b2b2b" stroke-width="1.2"><path d="M0.6 0.6 V14.4 H14.4 V0.6 M0.6 0.6 H14.4" /><path d="M3.8 0.6 V8.6 H10.6 V0.6 M7.2 0.6 V8.6"/></svg>
  <svg style="left:1420px;top:10.5px" width="9" height="2"><rect width="8.5" height="1.2" fill="#3b3b3b"/></svg>
  <div class="abs" style="left:1434px;top:10.6px;width:104px;height:1px;background:#5c5c5c"></div>
  <div class="abs" style="left:1476px;top:6.5px;width:4.5px;height:10.5px;background:#4a4a4a"></div>
  <div class="abs" style="left:1486px;top:8px;width:1px;height:6px;background:#5c5c5c"></div>
  <svg style="left:1542.5px;top:6.5px" width="10" height="10" viewBox="0 0 10 10"><path d="M5 0.5 V9.5 M0.5 5 H9.5" stroke="#3b3b3b" stroke-width="1.1"/></svg>
  <div class="st" style="left:1565.5px;top:5.5px;font-size:10.4px">%85</div>
</div>
</body></html>
